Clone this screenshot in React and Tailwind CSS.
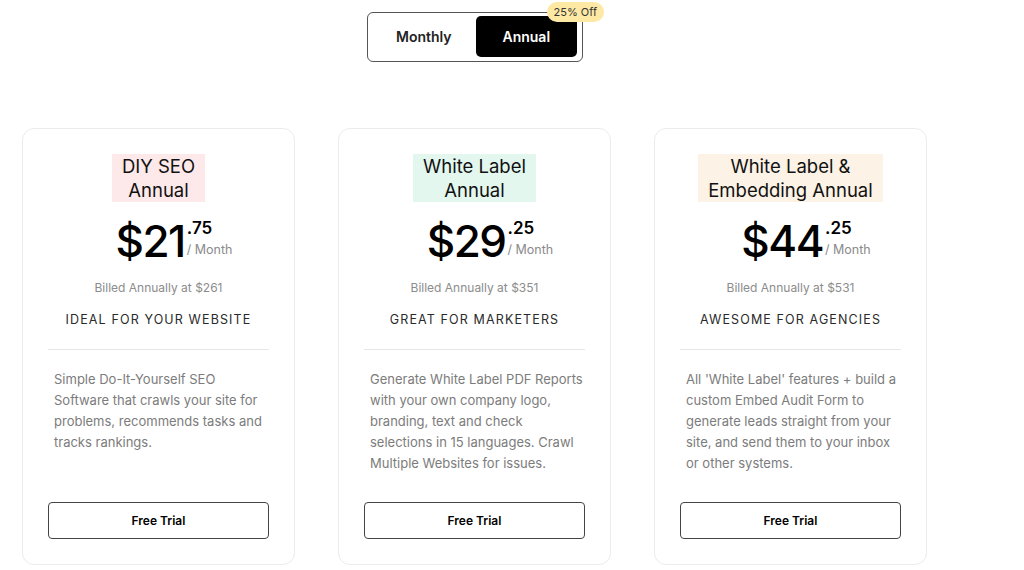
const plans = [
  {
    title: ['DIY SEO', 'Annual'],
    tint: 'bg-[#fde9e9]',
    dollars: '21',
    cents: '75',
    billed: '$261',
    tagline: 'IDEAL FOR YOUR WEBSITE',
    desc: [
      'Simple Do-It-Yourself SEO',
      'Software that crawls your site for',
      'problems, recommends tasks and',
      'tracks rankings.',
    ],
  },
  {
    title: ['White Label', 'Annual'],
    tint: 'bg-[#e3f7ef]',
    dollars: '29',
    cents: '25',
    billed: '$351',
    tagline: 'GREAT FOR MARKETERS',
    desc: [
      'Generate White Label PDF Reports',
      'with your own company logo,',
      'branding, text and check',
      'selections in 15 languages. Crawl',
      'Multiple Websites for issues.',
    ],
  },
  {
    title: ['White Label &', 'Embedding Annual'],
    tint: 'bg-[#fcf2e6]',
    dollars: '44',
    cents: '25',
    billed: '$531',
    tagline: 'AWESOME FOR AGENCIES',
    desc: [
      "All 'White Label' features + build a",
      'custom Embed Audit Form to',
      'generate leads straight from your',
      'site, and send them to your inbox',
      'or other systems.',
    ],
  },
]

function PlanCard({ plan }) {
  return (
    <div className="w-[273px] h-[437px] rounded-xl border border-[#ececec] bg-white px-[25px] pt-[25px] flex flex-col">
      {/* title */}
      <div className="flex justify-center">
        <h2 className={`${plan.tint} px-[10px] text-[18.5px] leading-[24px] text-[#111] text-center`}>
          {plan.title[0]}
          <br />
          {plan.title[1]}
        </h2>
      </div>

      {/* price */}
      <div className="flex justify-center items-start mt-[18px] h-[44px] pl-[31px]">
        <span className="text-[44px] leading-[42px] font-medium text-black tracking-[-1.5px]">${plan.dollars}</span>
        <div className="flex flex-col ml-[2px]">
          <span className="text-[17px] leading-[17px] font-semibold text-black">.{plan.cents}</span>
          <span className="text-[12.5px] leading-[16px] text-[#8a8a8a] mt-[5px]">/ Month</span>
        </div>
      </div>

      <p className="text-center text-[12px] text-[#8c8c8c] mt-[16px] leading-[16px]">
        Billed Annually at {plan.billed}
      </p>
      <p className="text-center text-[12.5px] tracking-[0.09em] text-[#2a2a2a] mt-[16px] leading-[16px]">
        {plan.tagline}
      </p>

      <hr className="border-0 border-t border-[#e6e6e6] mt-[21px]" />

      <p className="pl-[6px] mr-[-8px] mt-[19px] text-[13px] leading-[21px] text-[#7c7c7c]">
        {plan.desc.map((line) => (
          <span key={line} className="block whitespace-nowrap">
            {line}
          </span>
        ))}
      </p>

      <div className="mt-auto mb-[25px]">
        <button className="w-full h-[37px] rounded-[4px] border border-[#444] text-[12px] font-semibold text-black">
          Free Trial
        </button>
      </div>
    </div>
  )
}

export default function App() {
  return (
    <div className="w-[1024px] h-[570px] bg-white overflow-hidden font-['Inter',sans-serif]">
      {/* billing toggle */}
      <div className="flex pl-[367px] pt-[12px]">
        <div className="relative w-[216px] h-[50px] rounded-[6px] border border-[#555] flex items-start pt-[3px] pl-[4px] pr-[5px]">
          <span className="w-[104px] h-[41px] flex items-center justify-center text-[14px] font-semibold text-[#222]">Monthly</span>
          <span className="w-[102px] h-[41px] rounded-[5px] bg-black text-white text-[14px] font-semibold flex items-center justify-center">
            Annual
          </span>
          <span className="absolute right-[-22px] top-[-11px] rounded-full bg-[#fde9a4] px-[7px] py-[2px] text-[11px] leading-[16px] text-[#333]">
            25% Off
          </span>
        </div>
      </div>

      {/* plans */}
      <div className="flex gap-[43px] pl-[22px] mt-[66px]">
        {plans.map((p) => (
          <PlanCard key={p.dollars} plan={p} />
        ))}
      </div>
    </div>
  )
}
